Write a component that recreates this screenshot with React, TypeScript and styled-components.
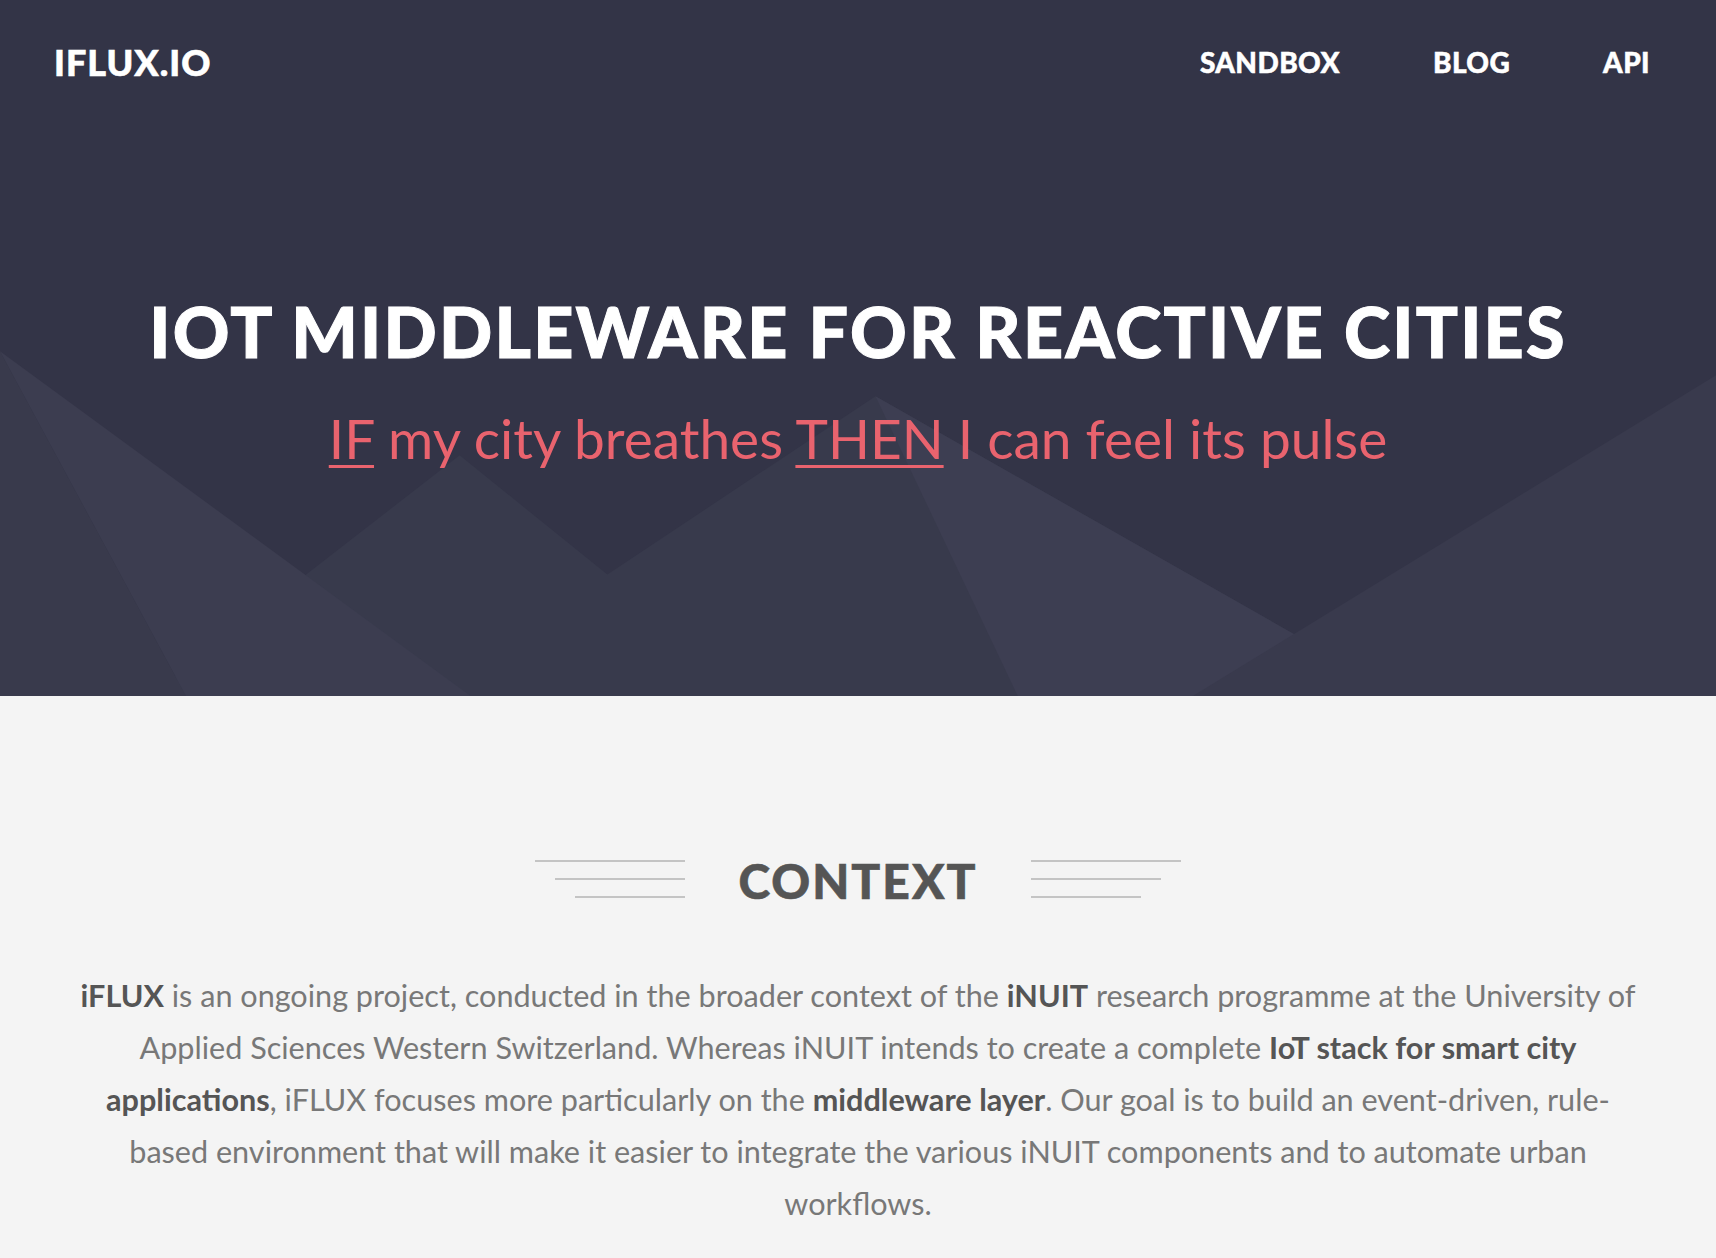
import React from "react";
import styled, { createGlobalStyle } from "styled-components";

const GlobalStyle = createGlobalStyle`
  html, body {
    margin: 0;
    padding: 0;
    background: #f4f4f4;
  }
  body {
    font-family: Lato, "Open Sans", sans-serif;
  }
  * {
    box-sizing: border-box;
  }
`;

const Hero = styled.header`
  position: relative;
  height: 696px;
  background: #333447;
  overflow: hidden;
`;

const Backdrop = styled.svg`
  position: absolute;
  inset: 0;
  width: 100%;
  height: 100%;
  display: block;
`;

const HeroContent = styled.div`
  position: relative;
  display: flex;
  flex-direction: column;
  align-items: center;
`;

const TopBar = styled.nav`
  align-self: stretch;
  display: flex;
  justify-content: space-between;
  align-items: center;
  padding: 44px 66px 0 54px;
  height: 80px;
`;

const Logo = styled.a`
  color: #fff;
  font-size: 36px;
  font-weight: 900;
  letter-spacing: 1px;
  line-height: 36px;
  text-decoration: none;
  -webkit-text-stroke: 0.6px #fff;
`;

const Menu = styled.ul`
  display: flex;
  gap: 93px;
  list-style: none;
  margin: 0;
  padding: 0;
`;

const MenuLink = styled.a`
  color: #fff;
  font-size: 28px;
  font-weight: 900;
  letter-spacing: 0.4px;
  line-height: 36px;
  text-decoration: none;
  -webkit-text-stroke: 0.5px #fff;
`;

const Title = styled.h1`
  margin: 216px 0 0;
  color: #fff;
  font-size: 70px;
  font-weight: 900;
  line-height: 70px;
  letter-spacing: 2.2px;
  text-align: center;
  -webkit-text-stroke: 1px #fff;
`;

const Tagline = styled.p`
  margin: 44px 0 0;
  color: #e9636e;
  font-size: 55px;
  font-weight: 400;
  line-height: 56px;
  text-align: center;
`;

const Keyword = styled.span`
  text-decoration: underline;
  text-decoration-thickness: 3px;
  text-underline-offset: 6px;
`;

const Section = styled.section`
  background: #f4f4f4;
  padding: 161px 75px 40px;
  display: flex;
  flex-direction: column;
  align-items: center;
`;

const HeadingRow = styled.div`
  display: flex;
  align-items: center;
  gap: 53px;
`;

const Heading = styled.h2`
  margin: 0;
  color: #555;
  font-size: 48px;
  font-weight: 900;
  line-height: 48px;
  letter-spacing: 2px;
  -webkit-text-stroke: 0.6px #555;
`;

const Rules = styled.div<{ $side: "left" | "right" }>`
  display: flex;
  flex-direction: column;
  gap: 16px;
  align-items: ${(p) => (p.$side === "left" ? "flex-end" : "flex-start")};
  margin-top: -4px;
`;

const Rule = styled.span<{ $w: number }>`
  display: block;
  width: ${(p) => p.$w}px;
  height: 2px;
  background: #c4c4c4;
`;

const Body = styled.p`
  margin: 65px 0 0;
  color: #787878;
  font-size: 30.6px;
  line-height: 52px;
  text-align: center;

  strong {
    color: #555;
    font-weight: 700;
  }
`;

const Mountains = () => (
  <Backdrop viewBox="0 0 1568 636" preserveAspectRatio="none">
    <polygon points="137,636 420,416 555,525 800,362 1282,636" fill="#383a4c" />
    <polygon points="800,362 1282,636 930,636" fill="#3d3e52" />
    <polygon points="1568,343 1568,636 1090,636" fill="#393a4d" />
    <polygon points="0,321 170,636 0,636" fill="#393a4c" />
    <polygon points="0,321 430,636 170,636" fill="#3c3d50" />
  </Backdrop>
);

export default function App() {
  return (
    <>
      <GlobalStyle />
      <Hero>
        <Mountains />
        <HeroContent>
          <TopBar>
            <Logo href="#">IFLUX.IO</Logo>
            <Menu>
              <li><MenuLink href="#">SANDBOX</MenuLink></li>
              <li><MenuLink href="#">BLOG</MenuLink></li>
              <li><MenuLink href="#">API</MenuLink></li>
            </Menu>
          </TopBar>
          <Title>IOT MIDDLEWARE FOR REACTIVE CITIES</Title>
          <Tagline>
            <Keyword>IF</Keyword> my city breathes <Keyword>THEN</Keyword> I can feel its pulse
          </Tagline>
        </HeroContent>
      </Hero>
      <Section>
        <HeadingRow>
          <Rules $side="left">
            <Rule $w={150} />
            <Rule $w={130} />
            <Rule $w={110} />
          </Rules>
          <Heading>CONTEXT</Heading>
          <Rules $side="right">
            <Rule $w={150} />
            <Rule $w={130} />
            <Rule $w={110} />
          </Rules>
        </HeadingRow>
        <Body>
          <strong>iFLUX</strong> is an ongoing project, conducted in the broader context of the{" "}
          <strong>iNUIT</strong> research programme at the University of Applied Sciences Western
          Switzerland. Whereas iNUIT intends to create a complete{" "}
          <strong>IoT stack for smart city applications</strong>, iFLUX focuses more particularly on
          the <strong>middleware layer</strong>. Our goal is to build an event-driven, rule-based
          environment that will make it easier to integrate the various iNUIT components and to
          automate urban workflows.
        </Body>
      </Section>
    </>
  );
}
